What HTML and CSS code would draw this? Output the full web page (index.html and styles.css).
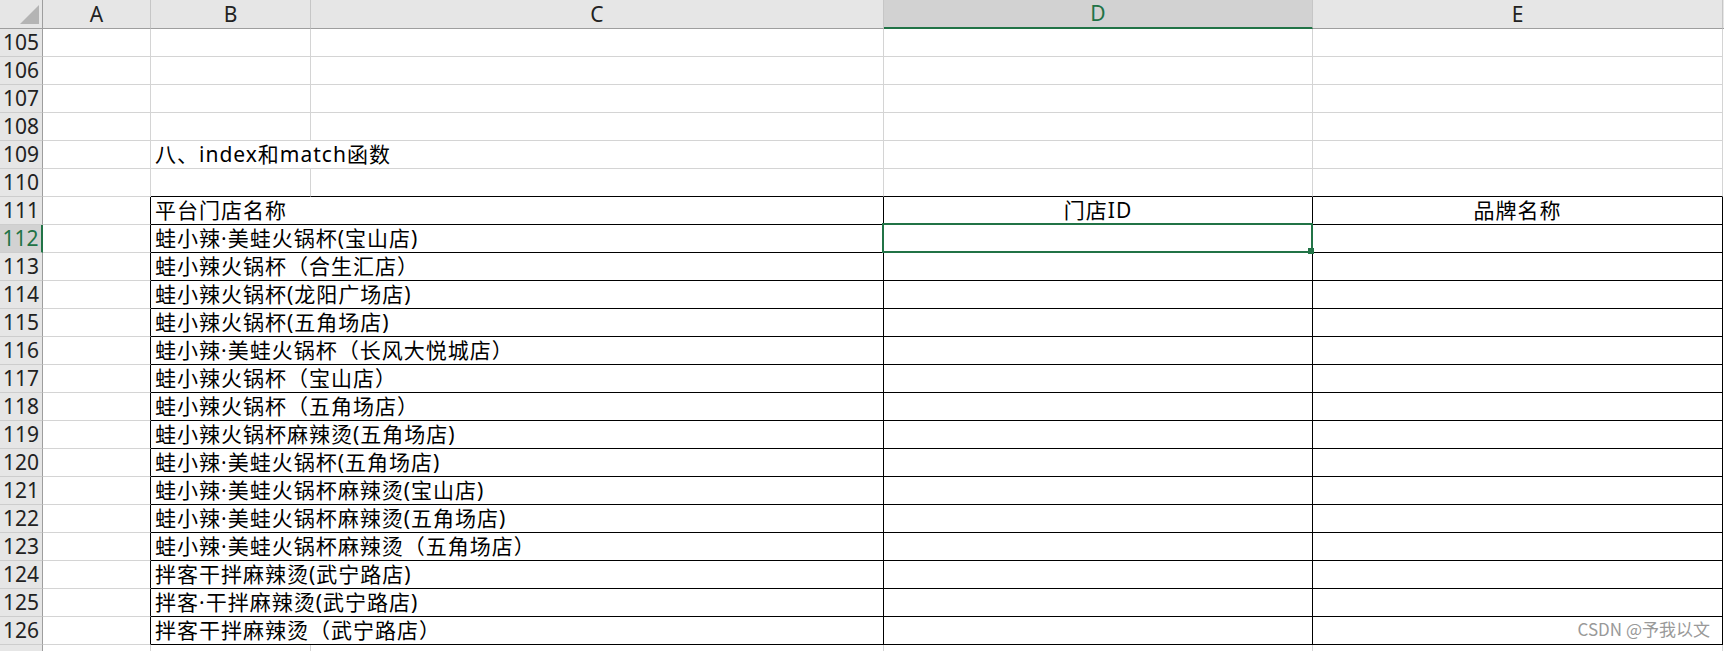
FILE: index.html
```html
<!DOCTYPE html>
<html lang="zh">
<head>
    <meta charset="UTF-8">
    <meta name="viewport" content="width=device-width, initial-scale=1.0">
    <title>index和match函数</title>
    <link rel="stylesheet" href="styles.css">
</head>
<body>
<div class="page">
    <div class="sheet" id="sheet">
        <div class="cell col-head corner">
            <svg width="19" height="19" viewBox="0 0 19 19"><polygon points="19,0 19,19 0,19" fill="#b4b4b4"/></svg>
        </div>
        <div class="cell col-head">A</div>
        <div class="cell col-head">B</div>
        <div class="cell col-head">C</div>
        <div class="cell col-head active">D</div>
        <div class="cell col-head">E</div>
        <div class="cell col-head edge"></div>
    </div>
    <div class="mark">CSDN @予我以文</div>
</div>
<script>
    // 平台门店名称（112 ~ 126 行）
    const stores = [
        '蛙小辣·美蛙火锅杯(宝山店)',
        '蛙小辣火锅杯（合生汇店）',
        '蛙小辣火锅杯(龙阳广场店)',
        '蛙小辣火锅杯(五角场店)',
        '蛙小辣·美蛙火锅杯（长风大悦城店）',
        '蛙小辣火锅杯（宝山店）',
        '蛙小辣火锅杯（五角场店）',
        '蛙小辣火锅杯麻辣烫(五角场店)',
        '蛙小辣·美蛙火锅杯(五角场店)',
        '蛙小辣·美蛙火锅杯麻辣烫(宝山店)',
        '蛙小辣·美蛙火锅杯麻辣烫(五角场店)',
        '蛙小辣·美蛙火锅杯麻辣烫（五角场店）',
        '拌客干拌麻辣烫(武宁路店)',
        '拌客·干拌麻辣烫(武宁路店)',
        '拌客干拌麻辣烫（武宁路店）'
    ];

    const sheet = document.getElementById('sheet');

    function addCell(cls, text) {
        const cell = document.createElement('div');
        cell.className = 'cell ' + cls;
        if (text) cell.textContent = text;
        sheet.appendChild(cell);
        return cell;
    }

    // 最后一行只露出几个像素，不写行号
    for (let row = 105; row <= 127; row++) {
        addCell(row === 112 ? 'row-head active' : 'row-head', row < 127 ? String(row) : '');

        if (row === 109) {
            addCell('');
            addCell('merge', '八、index和match函数');
            addCell('');
            addCell('');
        } else if (row === 110) {
            addCell('');
            addCell('tb-top');
            addCell('tb-top');
            addCell('tb-top');
            addCell('tb-top');
        } else if (row === 111) {
            addCell('tb-left');
            addCell('merge tb', '平台门店名称');
            addCell('tb center', '门店ID');
            addCell('tb center', '品牌名称');
        } else if (row > 111 && row <= 126) {
            addCell('tb-left');
            addCell('merge tb', stores[row - 112]);
            addCell(row === 112 ? 'tb sel' : 'tb');
            addCell('tb');
        } else {
            addCell('');
            addCell('');
            addCell('');
            addCell('');
            addCell('');
        }

        addCell('edge');
    }
</script>
</body>
</html>
```

FILE: styles.css
```css
body {
    margin: 0;
    padding: 0;
    background-color: #fff;
    color: #000;
    font-family: "Noto Sans", "Noto Sans CJK SC", sans-serif;
}

.page {
    position: relative;
    width: 1724px;
    height: 651px;
    overflow: hidden;
}

.sheet {
    display: grid;
    grid-template-columns: 43px 108px 160px 573px 429px 410px 1px;
    grid-template-rows: 29px;
    grid-auto-rows: 28px;
}

.cell {
    box-sizing: border-box;
    border-right: 1px solid #d4d4d4;
    border-bottom: 1px solid #d4d4d4;
    padding: 0 4px;
    font-size: 21px;
    letter-spacing: 1px;
    line-height: 27px;
    white-space: nowrap;
    overflow: hidden;
}

/* 列标题 */
.col-head {
    background-color: #e6e6e6;
    border-right-color: #c6c6c6;
    border-bottom-color: #9e9e9e;
    padding: 0;
    color: #222;
    font-size: 21px;
    letter-spacing: 0;
    line-height: 28px;
    text-align: center;
    overflow: visible;
}

.col-head.active {
    background-color: #d2d2d2;
    border-bottom: 2px solid #217346;
    color: #217346;
    line-height: 27px;
}

.corner {
    display: flex;
    justify-content: flex-end;
    align-items: flex-end;
    padding: 0 3px 4px 0;
    border-right-color: #9e9e9e;
}

/* 行号 */
.row-head {
    background-color: #e6e6e6;
    border-right-color: #9e9e9e;
    border-bottom-color: #cdcdcd;
    padding: 0;
    color: #222;
    font-size: 21px;
    letter-spacing: 0;
    text-align: center;
    overflow: visible;
}

.row-head.active {
    background-color: #d2d2d2;
    border-right: 2px solid #217346;
    color: #217346;
}

.edge {
    border: none;
}

.col-head.edge {
    background-color: #e6e6e6;
    border-bottom: 1px solid #9e9e9e;
}

/* 表格边框 */
.tb {
    border-right-color: #000;
    border-bottom-color: #000;
}

.tb-top {
    border-bottom-color: #000;
}

.tb-left {
    border-right-color: #000;
}

.merge {
    grid-column: span 2;
}

.center {
    text-align: center;
}

/* 选中单元格 */
.sel {
    position: relative;
    overflow: visible;
}

.sel::after {
    content: "";
    position: absolute;
    left: -2px;
    top: -2px;
    right: -1px;
    bottom: -1px;
    border: 2px solid #217346;
}

.sel::before {
    content: "";
    position: absolute;
    right: -2px;
    bottom: -2px;
    width: 6px;
    height: 6px;
    background-color: #217346;
    z-index: 1;
}

.mark {
    position: absolute;
    right: 14px;
    top: 619px;
    color: #999;
    font-size: 17px;
    line-height: 20px;
    font-family: "Noto Sans CJK SC", sans-serif;
}
```
